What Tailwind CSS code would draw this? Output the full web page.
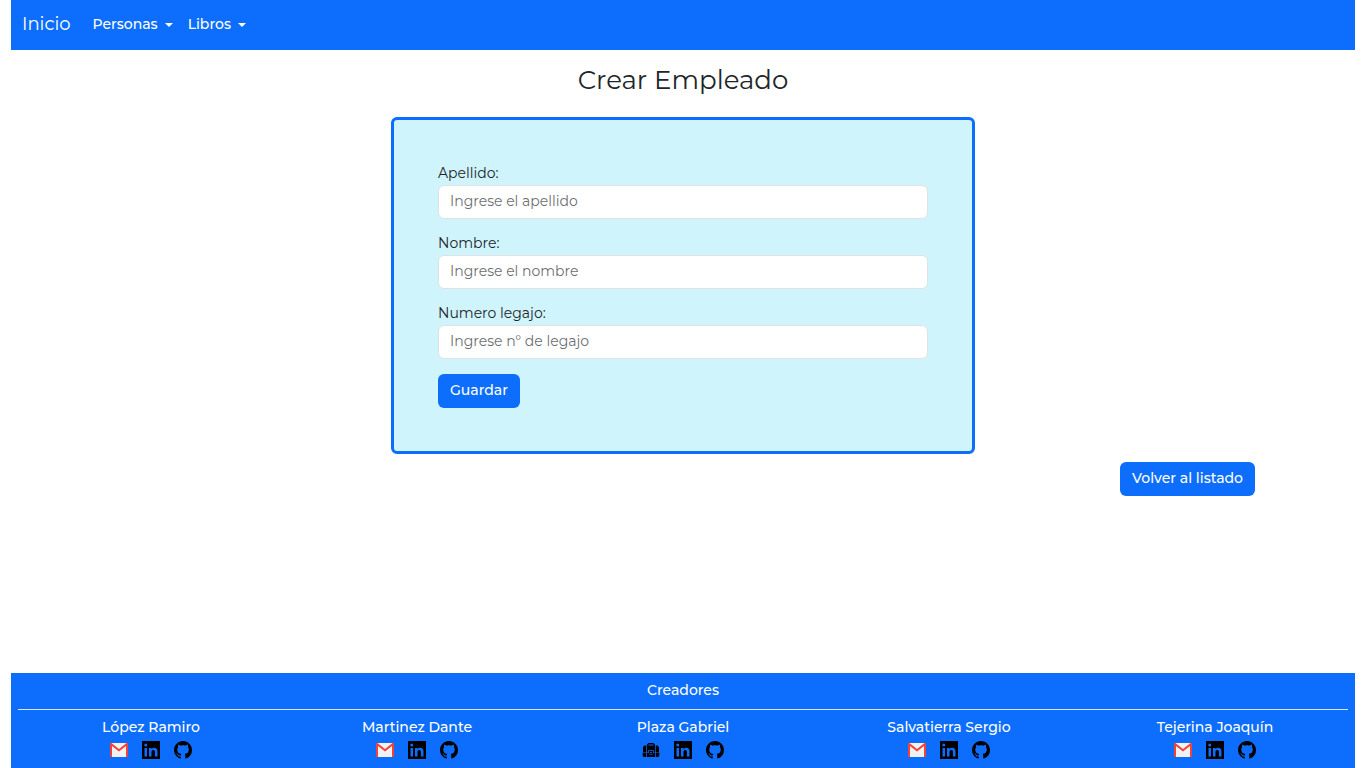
<!DOCTYPE html>
<html lang="es">
<head>
<meta charset="utf-8">
<meta name="viewport" content="width=device-width, initial-scale=1">
<title>Crear Empleado</title>
<script src="https://cdn.jsdelivr.net/npm/@tailwindcss/browser@4"></script>
</head>
<body class="bg-white font-['Montserrat','Inter',sans-serif] text-[14px] font-medium leading-[22px] text-[#212529]">
<svg class="hidden" aria-hidden="true">
  <symbol id="gmail" viewBox="0 0 18 18">
    <path fill="#f2f2f2" d="M0 2h18v14H0z"/>
    <path fill="#f44336" d="M0 2h1.500L9 8l7.500-6H18v14h-2V5L9 10.500 2 5v11H0z"/>
  </symbol>
  <symbol id="linkedin" viewBox="0 0 18 18">
    <path fill-rule="evenodd" d="M0 0h18v18H0zM2.500 7v8.500h2.500V7zM3.750 2.500a1.500 1.500 0 1 0 0 3 1.500 1.500 0 0 0 0-3zM7 7v8.500h2.500V11c0-1.300.6-2 1.700-2s1.700.8 1.700 2v4.500h2.600v-5c0-2.400-1.300-3.700-3.300-3.700-1.300 0-2.200.6-2.700 1.400V7z"/>
  </symbol>
  <symbol id="github" viewBox="0 0 16 16">
    <path d="M8 0C3.580 0 0 3.580 0 8c0 3.540 2.290 6.530 5.470 7.590.4.070.55-.17.55-.38 0-.19-.01-.82-.01-1.490-2.010.37-2.530-.49-2.690-.94-.09-.23-.48-.94-.82-1.130-.28-.15-.68-.52-.01-.53.63-.01 1.080.58 1.230.82.72 1.210 1.870.87 2.330.66.07-.52.28-.87.51-1.070-1.780-.2-3.640-.89-3.640-3.950 0-.87.31-1.590.82-2.150-.08-.2-.36-1.020.08-2.120 0 0 .67-.21 2.200.82.64-.18 1.320-.27 2-.27s1.360.09 2 .27c1.530-1.040 2.200-.82 2.200-.82.44 1.100.16 1.920.08 2.120.51.56.82 1.270.82 2.150 0 3.070-1.870 3.750-3.650 3.950.29.25.54.73.54 1.480 0 1.070-.01 1.930-.01 2.200 0 .21.15.46.55.38A8.010 8.010 0 0 0 16 8c0-4.420-3.580-8-8-8z"/>
  </symbol>
  <symbol id="maletin" viewBox="0 0 18 18">
    <path d="M5 5V3.500L6.500 2h5L13 3.500V5h-1.500V3.500h-5V5z"/>
    <path d="M2.500 4.500H4V11H1V6zM14 4.500h1.500L17 6v5h-3zM4.700 4.500h8.600V11h-1.600V9.300H6.300V11H4.700zM.7 11.600H4V16H1.700l-1-1zM14 11.600h3.300V15l-1 1H14zM4.700 11.600h1.600l1.500 2.200h2.400l1.500-2.200h1.600V16H4.700z"/>
    <path fill-rule="evenodd" d="M7 10h4v2.500l-1 .8H8l-1-.8zM8.200 11v1.200h1.600V11z"/>
  </symbol>
</svg>

<div class="flex min-h-screen flex-col px-[11px]">
  <nav class="flex h-[50px] items-center bg-[#0d6efd] px-[11px] pb-[2px] text-white">
    <a href="#" class="mr-[22px] text-lg font-normal">Inicio</a>
    <button type="button" class="mr-[15px] flex items-center gap-[7px]">Personas
      <span class="mt-px border-x-4 border-t-4 border-x-transparent border-t-white"></span></button>
    <button type="button" class="flex items-center gap-[7px]">Libros
      <span class="mt-px border-x-4 border-t-4 border-x-transparent border-t-white"></span></button>
  </nav>

  <main>
    <h1 class="mt-[14px] text-center text-[26px] font-normal leading-8">Crear Empleado</h1>
    <form class="mx-auto mt-[21px] w-full max-w-[584px] rounded-md border-[3px] border-[#0d6efd] bg-[#cff4fc] px-11 pt-[42px] pb-[43px] font-normal">
      <label for="apellido" class="mb-px block">Apellido:</label>
      <input id="apellido" type="text" placeholder="Ingrese el apellido" class="mb-[13px] block h-[34px] w-full rounded-md border border-[#dee2e6] bg-white px-[11px] pb-[3px] placeholder:text-[#6c6f73]">
      <label for="nombre" class="mb-px block">Nombre:</label>
      <input id="nombre" type="text" placeholder="Ingrese el nombre" class="mb-[13px] block h-[34px] w-full rounded-md border border-[#dee2e6] bg-white px-[11px] pb-[3px] placeholder:text-[#6c6f73]">
      <label for="legajo" class="mb-px block">Numero legajo:</label>
      <input id="legajo" type="text" placeholder="Ingrese n° de legajo" class="mb-[15px] block h-[34px] w-full rounded-md border border-[#dee2e6] bg-white px-[11px] pb-[3px] placeholder:text-[#6c6f73]">
      <button type="submit" class="block rounded-md bg-[#0d6efd] px-3 pt-[5px] pb-[7px] font-medium text-white">Guardar</button>
    </form>
    <div class="mt-2 mr-[100px] flex justify-end">
      <a href="#" class="rounded-md bg-[#0d6efd] px-3 pt-[5px] pb-[7px] text-white">Volver al listado</a>
    </div>
  </main>

  <footer class="mt-auto bg-[#0d6efd] px-[7px] pt-[6px] pb-[9px] text-center text-white">
    <p>Creadores</p>
    <hr class="mt-2 mb-[6px] border-[#dbe9ff]">
    <div class="grid grid-cols-5">
      <div>
        <p>López Ramiro</p>
        <div class="mt-[3px] flex justify-center gap-[14px] text-black">
          <a href="#" aria-label="Correo"><svg class="size-[18px]"><use href="#gmail"/></svg></a>
          <a href="#" aria-label="LinkedIn"><svg class="size-[18px]"><use href="#linkedin"/></svg></a>
          <a href="#" aria-label="GitHub"><svg class="size-[18px]"><use href="#github"/></svg></a>
        </div>
      </div>
      <div>
        <p>Martinez Dante</p>
        <div class="mt-[3px] flex justify-center gap-[14px] text-black">
          <a href="#" aria-label="Correo"><svg class="size-[18px]"><use href="#gmail"/></svg></a>
          <a href="#" aria-label="LinkedIn"><svg class="size-[18px]"><use href="#linkedin"/></svg></a>
          <a href="#" aria-label="GitHub"><svg class="size-[18px]"><use href="#github"/></svg></a>
        </div>
      </div>
      <div>
        <p>Plaza Gabriel</p>
        <div class="mt-[3px] flex justify-center gap-[14px] text-black">
          <a href="#" aria-label="Portafolio"><svg class="size-[18px]"><use href="#maletin"/></svg></a>
          <a href="#" aria-label="LinkedIn"><svg class="size-[18px]"><use href="#linkedin"/></svg></a>
          <a href="#" aria-label="GitHub"><svg class="size-[18px]"><use href="#github"/></svg></a>
        </div>
      </div>
      <div>
        <p>Salvatierra Sergio</p>
        <div class="mt-[3px] flex justify-center gap-[14px] text-black">
          <a href="#" aria-label="Correo"><svg class="size-[18px]"><use href="#gmail"/></svg></a>
          <a href="#" aria-label="LinkedIn"><svg class="size-[18px]"><use href="#linkedin"/></svg></a>
          <a href="#" aria-label="GitHub"><svg class="size-[18px]"><use href="#github"/></svg></a>
        </div>
      </div>
      <div>
        <p>Tejerina Joaquín</p>
        <div class="mt-[3px] flex justify-center gap-[14px] text-black">
          <a href="#" aria-label="Correo"><svg class="size-[18px]"><use href="#gmail"/></svg></a>
          <a href="#" aria-label="LinkedIn"><svg class="size-[18px]"><use href="#linkedin"/></svg></a>
          <a href="#" aria-label="GitHub"><svg class="size-[18px]"><use href="#github"/></svg></a>
        </div>
      </div>
    </div>
  </footer>
</div>
</body>
</html>
